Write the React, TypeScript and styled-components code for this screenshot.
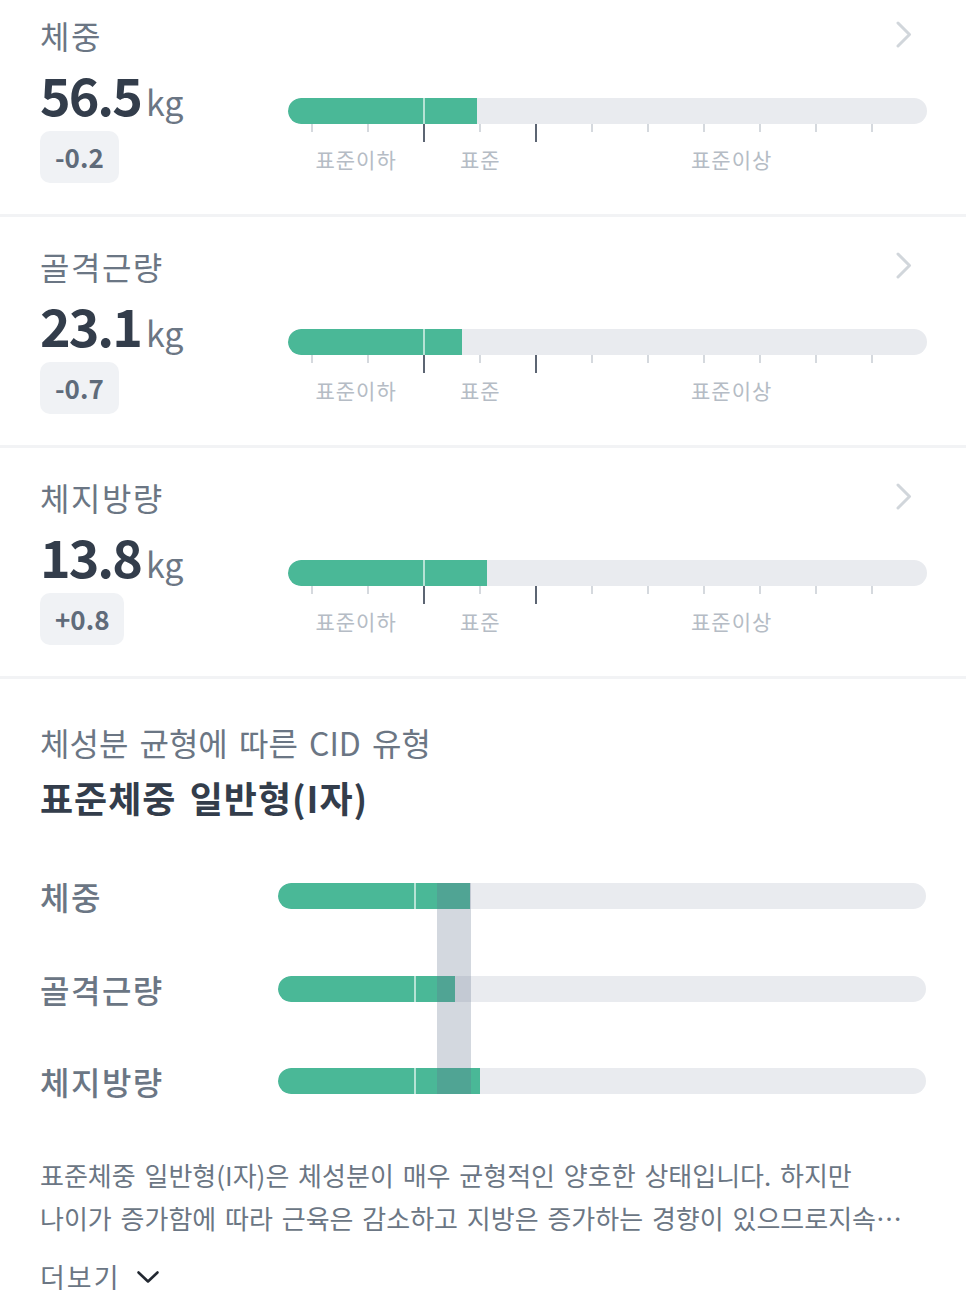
import React from 'react';
import styled, { createGlobalStyle } from 'styled-components';

const GlobalStyle = createGlobalStyle`
  html, body {
    margin: 0;
    padding: 0;
    background: #ffffff;
  }
  body {
    font-family: "Noto Sans CJK KR", "Noto Sans", sans-serif;
    -webkit-font-smoothing: antialiased;
  }
  * {
    box-sizing: border-box;
  }
`;

interface Metric {
  name: string;
  value: string;
  diff: string;
  fill: number;
}

// gauge geometry, measured on a 638px track
const GAUGE_WIDTH = 638;
const LOW_EDGE = 136 / GAUGE_WIDTH;
const HIGH_EDGE = 248 / GAUGE_WIDTH;
const TICKS = 11;

const metrics: Metric[] = [
  { name: '체중', value: '56.5', diff: '-0.2', fill: 189 / GAUGE_WIDTH },
  { name: '골격근량', value: '23.1', diff: '-0.7', fill: 174 / GAUGE_WIDTH },
  { name: '체지방량', value: '13.8', diff: '+0.8', fill: 199 / GAUGE_WIDTH },
];

// comparison bars, measured on a 648px track
const COMPARE_WIDTH = 648;
const compareRows = [
  { name: '체중', fill: 192 / COMPARE_WIDTH },
  { name: '골격근량', fill: 177 / COMPARE_WIDTH },
  { name: '체지방량', fill: 202 / COMPARE_WIDTH },
];
const BAND_START = 159 / COMPARE_WIDTH;
const BAND_END = 193 / COMPARE_WIDTH;

const pct = (n: number) => `${(n * 100).toFixed(3)}%`;

const ChevronRight = () => (
  <svg width="36" height="28" viewBox="0 0 36 28" fill="none">
    <path d="M8 2 L19.5 13.5 L8 25" stroke="#d1d6db" strokeWidth="3" strokeLinecap="round" strokeLinejoin="round" />
  </svg>
);

const ChevronDown = () => (
  <svg width="24" height="14" viewBox="0 0 24 14" fill="none">
    <path d="M2.5 2.5 L12 11.5 L21.5 2.5" stroke="#222831" strokeWidth="2.6" strokeLinecap="round" strokeLinejoin="round" />
  </svg>
);

const Gauge: React.FC<{ fill: number }> = ({ fill }) => (
  <GaugeWrap>
    <Track>
      <Fill style={{ width: pct(fill) }} />
      <Boundary style={{ left: pct(LOW_EDGE) }} />
    </Track>
    <TickRow>
      {Array.from({ length: TICKS }).map((_, i) => (
        <Tick key={i} $major={i === 2 || i === 4} />
      ))}
    </TickRow>
    <LabelRow>
      <RangeLabel style={{ flexBasis: pct(LOW_EDGE) }}>표준이하</RangeLabel>
      <RangeLabel style={{ flexBasis: pct(HIGH_EDGE - LOW_EDGE) }}>표준</RangeLabel>
      <RangeLabel style={{ flexBasis: pct(1 - HIGH_EDGE) }}>표준이상</RangeLabel>
    </LabelRow>
  </GaugeWrap>
);

const App: React.FC = () => {
  return (
    <Page>
      <GlobalStyle />
      {metrics.map((m) => (
        <MetricSection key={m.name}>
          <SectionHeader>
            <SectionTitle>{m.name}</SectionTitle>
            <ChevronRight />
          </SectionHeader>
          <SectionBody>
            <Summary>
              <ValueLine>
                <Value>{m.value}</Value>
                <Unit>kg</Unit>
              </ValueLine>
              <DiffBadge>{m.diff}</DiffBadge>
            </Summary>
            <Gauge fill={m.fill} />
          </SectionBody>
        </MetricSection>
      ))}

      <CidSection>
        <CidCaption>체성분 균형에 따른 CID 유형</CidCaption>
        <CidType>표준체중 일반형(I자)</CidType>

        <CompareChart>
          {compareRows.map((r, i) => (
            <React.Fragment key={r.name}>
              <CompareLabel style={{ gridRow: i + 1 }}>{r.name}</CompareLabel>
              <CompareTrack style={{ gridRow: i + 1 }}>
                <Fill style={{ width: pct(r.fill) }} />
                <Boundary style={{ left: pct(137 / COMPARE_WIDTH) }} />
              </CompareTrack>
            </React.Fragment>
          ))}
          <BandLayer>
            <Band style={{ marginLeft: pct(BAND_START), width: pct(BAND_END - BAND_START) }} />
          </BandLayer>
        </CompareChart>

        <Description>
          표준체중 일반형(I자)은 체성분이 매우 균형적인 양호한 상태입니다. 하지만
          <br />
          나이가 증가함에 따라 근육은 감소하고 지방은 증가하는 경향이 있으므로지속적인 운동과 식단 관리가 필요합니다.
        </Description>

        <MoreButton type="button">
          더보기
          <ChevronDown />
        </MoreButton>
      </CidSection>
    </Page>
  );
};

const Page = styled.div`
  width: 100%;
  background: #ffffff;
`;

const MetricSection = styled.section`
  padding: 27px 40px 31px;
  border-bottom: 3px solid #f2f3f5;

  &:first-of-type {
    padding-top: 13px;
  }
`;

const SectionHeader = styled.div`
  display: flex;
  align-items: center;
  justify-content: space-between;
  height: 44px;
`;

const SectionTitle = styled.h2`
  margin: 0;
  font-size: 32px;
  font-weight: 400;
  line-height: 44px;
  letter-spacing: 1.5px;
  color: #6b7684;
`;

const SectionBody = styled.div`
  display: grid;
  grid-template-columns: 248px 1fr;
  margin-top: 7px;
`;

const Summary = styled.div`
  display: flex;
  flex-direction: column;
  align-items: flex-start;
`;

const ValueLine = styled.div`
  display: flex;
  align-items: baseline;
  gap: 5px;
  height: 60px;
  line-height: 60px;
`;

const Value = styled.span`
  font-size: 52px;
  font-weight: 700;
  color: #333d4b;
  letter-spacing: -2px;
`;

const Unit = styled.span`
  font-size: 34px;
  font-weight: 400;
  color: #6b7684;
`;

const DiffBadge = styled.span`
  margin-top: 7px;
  height: 52px;
  padding: 0 15px;
  border-radius: 10px;
  background: #f0f2f5;
  font-size: 26px;
  font-weight: 600;
  line-height: 52px;
  color: #5f6b7a;
`;

const GaugeWrap = styled.div`
  margin-top: 34px;
`;

const Track = styled.div`
  position: relative;
  height: 26px;
  border-radius: 13px;
  background: #e9ebef;
  overflow: hidden;
`;

const Fill = styled.div`
  height: 100%;
  border-radius: 13px 0 0 13px;
  background: #4ab897;
`;

const Boundary = styled.span`
  position: absolute;
  top: 0;
  bottom: 0;
  width: 2px;
  margin-left: -1px;
  background: rgba(255, 255, 255, 0.6);
`;

const TickRow = styled.div`
  display: flex;
  align-items: flex-start;
  height: 18px;
  padding-left: 23px;
  overflow: hidden;
`;

const Tick = styled.span<{ $major: boolean }>`
  flex: 0 0 56px;
  height: ${({ $major }) => ($major ? '18px' : '8px')};
  border-left: 2px solid ${({ $major }) => ($major ? '#5c6573' : '#d5d9de')};
`;

const LabelRow = styled.div`
  display: flex;
  margin-top: 3px;
`;

const RangeLabel = styled.span`
  flex-grow: 0;
  flex-shrink: 0;
  text-align: center;
  font-size: 21px;
  line-height: 28px;
  letter-spacing: 1px;
  color: #b5bcc5;
`;

const CidSection = styled.section`
  padding: 41px 40px 0;
`;

const CidCaption = styled.p`
  margin: 0;
  font-size: 32px;
  line-height: 44px;
  word-spacing: 4px;
  color: #6b7684;
`;

const CidType = styled.h3`
  margin: 10px 0 0;
  font-size: 36px;
  font-weight: 700;
  line-height: 46px;
  letter-spacing: 1px;
  word-spacing: 4px;
  color: #333d4b;
`;

const CompareChart = styled.div`
  display: grid;
  grid-template-columns: 238px 1fr;
  grid-template-rows: repeat(3, 46px);
  row-gap: 46.5px;
  margin-top: 53px;
`;

const CompareLabel = styled.span`
  grid-column: 1;
  align-self: center;
  font-size: 32px;
  font-weight: 500;
  line-height: 46px;
  letter-spacing: 1.5px;
  color: #6b7684;
`;

const CompareTrack = styled(Track)`
  grid-column: 2;
  align-self: center;
`;

const BandLayer = styled.div`
  grid-column: 2;
  grid-row: 1 / 4;
  display: flex;
  padding: 10px 0;
  pointer-events: none;
  z-index: 1;
`;

const Band = styled.div`
  background: rgba(98, 116, 141, 0.28);
`;

const Description = styled.p`
  margin: 49px 0 0;
  padding-right: 20px;
  font-size: 26px;
  line-height: 43px;
  word-spacing: 3px;
  color: #6b7684;
  display: -webkit-box;
  -webkit-box-orient: vertical;
  -webkit-line-clamp: 2;
  overflow: hidden;
`;

const MoreButton = styled.button`
  display: flex;
  align-items: center;
  gap: 15px;
  margin-top: 20px;
  padding: 0;
  border: none;
  background: none;
  font-family: inherit;
  font-size: 27px;
  line-height: 36px;
  letter-spacing: 2px;
  color: #6b7684;
  cursor: pointer;
`;

export default App;
